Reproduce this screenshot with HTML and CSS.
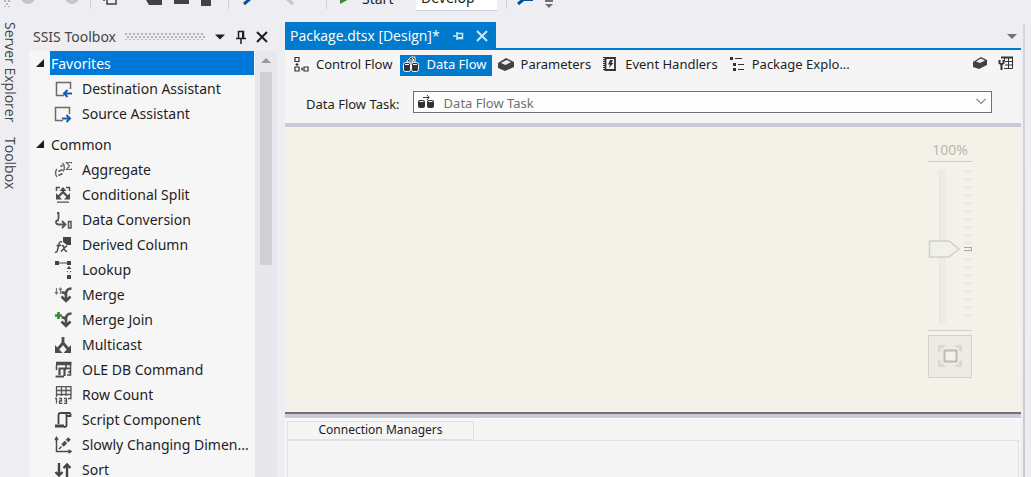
FILE: index.html
```html
<!DOCTYPE html>
<html lang="en">
<head>
<meta charset="utf-8">
<title>Package.dtsx [Design]*</title>
<link rel="stylesheet" href="styles.css">
</head>
<body>
<div class="toolbar" role="toolbar" aria-label="Standard">
  <span class="grip toolbar-grip"></span>
  <button aria-label="Back"><svg width="16" height="6"><circle cx="8" cy="-3" r="7" fill="#c6c6c9"/></svg></button>
  <button aria-label="Forward"><svg width="16" height="6"><circle cx="8" cy="-3" r="7" fill="#c6c6c9"/></svg></button>
  <span class="sep"></span>
  <button aria-label="New project"><svg width="18" height="6"><path d="M7 -4H16V4H7ZM3 -1H6M4 -2V1" fill="none" stroke="#424242" stroke-width="1.500"/></svg></button>
  <button aria-label="Open"><svg width="20" height="6"><path d="M2 0H18V5H5Z" fill="#424242"/></svg></button>
  <button aria-label="Save"><svg width="18" height="6"><path d="M2 0H17V4H2Z" fill="#424242"/></svg></button>
  <button aria-label="Save all"><svg width="16" height="6"><path d="M2 0H12V6H2Z" fill="#424242"/></svg></button>
  <span class="sep"></span>
  <button aria-label="Undo"><svg width="16" height="6"><path d="M4 4L11 -2" stroke="#00539c" stroke-width="3"/></svg></button>
  <button aria-label="Redo"><svg width="16" height="6"><path d="M2 -2L9 4" stroke="#c6c6c9" stroke-width="3"/></svg></button>
  <span class="sep"></span>
  <button aria-label="Run"><svg width="16" height="6"><path d="M2 -8L13 -2L2 4Z" fill="#388a34"/></svg></button>
  <button class="start">Start</button>
  <button class="config">Develop</button>
  <span class="sep"></span>
  <button aria-label="Find"><svg width="18" height="6"><path d="M2 4L8 -1" stroke="#00539c" stroke-width="3"/><path d="M8 0H17" stroke="#00539c" stroke-width="2"/></svg></button>
  <button aria-label="Toolbar options"><svg width="10" height="10"><path d="M1 1H9" stroke="#717171" stroke-width="2"/><path d="M1 4H9L5 8Z" fill="#717171"/></svg></button>
</div>
<div class="workspace">
  <nav class="rail">
    <button>Server Explorer</button>
    <button>Toolbox</button>
  </nav>

  <aside class="toolbox">
    <header class="toolbox-head">
      <h2>SSIS Toolbox</h2>
      <span class="grip"></span>
      <button aria-label="Window position"><svg width="12" height="14"><path d="M1 4.500H11L6 9.500Z" fill="#1e1e1e"/></svg></button>
      <button aria-label="Auto hide"><svg width="12" height="14" fill="none" stroke="#1e1e1e"><path d="M3.500 8V1.500H8.500V8M1 8.500H11M6 9V14" stroke-width="1.500"/><path d="M8 1V8" stroke-width="2"/></svg></button>
      <button aria-label="Close"><svg width="12" height="14"><path d="M1 2L11 12M11 2L1 12" stroke="#1e1e1e" stroke-width="2"/></svg></button>
    </header>
    <div class="toolbox-body">
      <div class="tree">
        <section>
          <h3 class="group selected"><svg width="22" height="24"><path d="M15 8V16H7Z" fill="#1e1e1e"/></svg><span>Favorites</span></h3>
          <ul>
            <li><svg width="18" height="18" fill="none"><path d="M10 15.500H2.500V2.500H16.500V9" stroke="#6a6a6a" stroke-width="1.500"/><path d="M18 13.500H11M13.500 10L10 13.500L13.500 17" stroke="#1460a8" stroke-width="2"/></svg>Destination Assistant</li>
            <li><svg width="18" height="18" fill="none"><path d="M9 15.500H1.500V2.500H15.500V9" stroke="#6a6a6a" stroke-width="1.500"/><path d="M8 13.500H15M12.500 10L16 13.500L12.500 17" stroke="#1460a8" stroke-width="2"/></svg>Source Assistant</li>
          </ul>
        </section>
        <section>
          <h3 class="group"><svg width="22" height="24"><path d="M15 8V16H7Z" fill="#1e1e1e"/></svg><span>Common</span></h3>
          <ul>
            <li><svg width="18" height="18" fill="none" stroke="#666"><path d="M3 8Q0 12 3 16M8.500 2Q12 6 9 10.500" stroke-width="1.400"/><path d="M4.500 10H6.500M4.500 14H6.500M7.500 4V6M7.500 8V10M7.500 12V14" stroke-width="2"/><path d="M18 3V1.500H12.500L15.500 5L12.500 8.500H18V7" stroke-width="1.200"/></svg>Aggregate</li>
            <li><svg width="18" height="18" fill="none" stroke="#4c4c4c"><path d="M2.500 5V1.500H6M12 1.500H15.500V5" stroke-width="1.500"/><path d="M9 2V6L4 11M9 6L14 11" stroke-width="2.200"/><path d="M5.500 5L9 1L12.500 5ZM2 7V13.500H8ZM16 7V13.500H10Z" fill="#4c4c4c" stroke="none"/><path d="M3 16.200H15" stroke="#777" stroke-width="1.600"/></svg>Conditional Split</li>
            <li><svg width="18" height="18" fill="none" stroke="#555"><path d="M3 2H4.500V8M5 9Q2 9 2 11Q2 13.500 5 13.500H11M8 10L11.500 13.500L8 17" stroke-width="1.800"/><path d="M14.500 10.500H17V17H14.500Z" stroke-width="1.500"/></svg>Data Conversion</li>
            <li><svg width="18" height="18" fill="none" stroke="#4c4c4c"><path d="M9 1H17V9H13L9 6Z" fill="#444" stroke="none"/><path d="M8 6Q5.500 5 5 8L3.500 14Q3 17 1 16M2.500 9.500H7" stroke-width="1.500"/><path d="M7.500 9.500Q9.500 9 10 12T13 15.500M13 9.500L7 15.500" stroke-width="1.500"/></svg>Derived Column</li>
            <li><svg width="18" height="18" fill="#444"><path d="M1 0H5V4H1ZM13 0H17V4H13ZM13 14H17V18H13ZM5 1.500H13V2.500H5ZM14 5.500H16V8H14ZM14 10H16V12H14ZM12.500 8L15 5.500L17.500 8ZM12.500 10L15 12.500L17.500 10Z"/></svg>Lookup</li>
            <li><svg width="18" height="18" fill="none" stroke="#4c4c4c"><path d="M2.500 2V8M1 6L2.500 8L4 6M6.500 8V2M5 4L6.500 2L8 4" stroke="#777" stroke-width="1.200"/><path d="M17.500 2.500Q12 2.500 12 8V15M7.500 6.500Q12 6 12 10M7.500 10.500L12 15L16.500 10.500" stroke-width="2.600"/></svg>Merge</li>
            <li><svg width="18" height="18" fill="none" stroke="#4c4c4c"><path d="M4.500 1V8M1 4.500H8" stroke="#388a34" stroke-width="2.600"/><path d="M17.500 2.500Q12 2.500 12 8V15M7.500 6.500Q12 6 12 10M7.500 10.500L12 15L16.500 10.500" stroke-width="2.600"/></svg>Merge Join</li>
            <li><svg width="18" height="18" fill="none" stroke="#4c4c4c"><path d="M9 1V7L3 14M9 7L15 14" stroke-width="2.800"/><path d="M1 9V17H8.500ZM17 9V17H9.500Z" fill="#4c4c4c" stroke="none"/></svg>Multicast</li>
            <li><svg width="18" height="18" fill="none" stroke="#4c4c4c"><path d="M2 2.500H17.500" stroke-width="3.500"/><path d="M2.500 4V9M16.500 4V14H13M12 4V7M13 7.500H17M14 11H17" stroke-width="1.500"/><path d="M4.500 7.500H12L10.500 9V15M5.500 8V14M1.500 15.500H10" stroke-width="2.200"/></svg>OLE DB Command</li>
            <li><svg width="18" height="18" fill="none" stroke="#555"><path d="M2.500 .500H17V12.500H14M2.500 0V11M7.500 0V10M12 0V10M2 4.500H17M2 8.500H17" stroke-width="1.300"/><path d="M1 12.500H2.500V17.500M5 12.500H7.500V15H5.500V17.500H8.500M10 12.500H12.500V17.500H10M10.500 15H12" stroke-width="1.300"/></svg>Row Count</li>
            <li><svg width="18" height="18" fill="none" stroke="#444"><path d="M4.500 13V4Q4.500 2 6.500 2H15Q17 2 16.500 5H13M12.500 3V14Q12.500 16 10 16" stroke-width="1.800"/><path d="M1 15H10" stroke-width="3"/></svg>Script Component</li>
            <li><svg width="18" height="18" fill="none" stroke="#4c4c4c"><path d="M2.500 2V15.500H17M1 4L2.500 1.500L4 4M14.500 14L17 15.500L14.500 17" stroke-width="1.500"/><path d="M5 13L7.500 10.500" stroke-width="1.500"/><path d="M8.500 9.500L12 6M13 5L15.500 2.500" stroke-width="3.500"/></svg>Slowly Changing Dimen...</li>
            <li><svg width="18" height="18" fill="none" stroke="#444" stroke-width="2.400"><path d="M5 2V15M1.500 11L5 14.500L8.500 11M13 16V3M9.500 7L13 3.500L16.500 7"/></svg>Sort</li>
          </ul>
        </section>
      </div>
      <div class="scrollbar">
        <svg width="12" height="14"><path d="M1 12H11L6 7Z" fill="#999"/></svg>
        <span class="thumb"></span>
      </div>
    </div>
  </aside>

  <main class="editor">
    <div class="doc-tabs">
      <div class="doc-tab">
        <span>Package.dtsx [Design]*</span>
        <button aria-label="Pin tab"><svg width="12" height="12" fill="none" stroke="#d0e6f5"><path d="M1 6H5M5 2V10M5 3.500H10.500V8.500H5" stroke-width="1.500"/><path d="M5 8H11" stroke-width="2"/></svg></button>
        <button aria-label="Close tab"><svg width="12" height="12"><path d="M1 1L11 11M11 1L1 11" stroke="#d0e6f5" stroke-width="2"/></svg></button>
      </div>
      <button class="doc-menu" aria-label="Open documents"><svg width="10" height="6"><path d="M0 0H10L5 5Z" fill="#717171"/></svg></button>
    </div>
    <div class="designer">
      <div class="views">
        <button class="view"><svg width="16" height="16" fill="none" stroke="#333"><path d="M2 1.500H6V5.500H2ZM2 11H6V15H2ZM11 11H15V15H11ZM4 7V10M8 13H10" stroke-width="1.200"/><path d="M2.500 8.500H5.500M9 11.500V14.500"/></svg>Control Flow</button>
        <button class="view active"><svg width="16" height="16"><g fill="#333" stroke="#f5f5f5"><path d="M4 5L8 1H12V6H4Z"/><rect x=".5" y="6.500" width="7" height="9" rx="2"/><rect x="8.500" y="6.500" width="7" height="9" rx="2"/></g><path d="M2 8.500H6M10 8.500H14M6 4H11M9 2L11 4L9 6" stroke="#f5f5f5" fill="none"/></svg>Data Flow</button>
        <button class="view"><svg width="16" height="16"><path d="M0 7L8 2L16 6V11L7 15L0 12Z" fill="#424242"/><path d="M3 7L8.500 4L13 6L7.500 9Z" fill="#eee"/></svg>Parameters</button>
        <button class="view"><svg width="16" height="16"><path d="M3.500 2H13V14H3.500Z" fill="#f5f5f5" stroke="#333" stroke-width="1.800"/><path d="M2 1V15" stroke="#333" stroke-width="2" stroke-dasharray="1 1"/><path d="M8 4H11L9.500 7H11.500L7 12L8 8.500H6Z" fill="#333"/></svg>Event Handlers</button>
        <button class="view"><svg width="16" height="16" fill="#333"><path d="M1 1H4V4H1ZM4 7H7V10H4ZM4 12H7V15H4ZM6 2H13V3H6ZM9 8H15V9H9ZM9 13H15V14H9Z"/></svg>Package Explo...</button>
        <span class="view-tools">
          <button aria-label="Parameters"><svg width="16" height="16"><path d="M1 7L9 2L15 5V10L7 14L1 12Z" fill="#424242"/><path d="M4 6.500L9 3.500L13 5.500L8 8Z" fill="#eee"/></svg></button>
          <button aria-label="Variables"><svg width="16" height="16" fill="none" stroke="#333"><path d="M3 2.500H14.500M7 6.500H14.500M7 10H14.500M6 13.500H14.500V2M6.500 2V6M10.500 2V14"/><path d="M3 2.500H15" stroke-width="2"/><path d="M1.500 5V8L3.500 9.500V15M5.500 5V8L3.500 9.500" stroke-width="2"/></svg></button>
        </span>
      </div>
      <div class="task">
        <span id="task-label">Data Flow Task:</span>
        <button class="combo" aria-labelledby="task-label task-value">
          <svg width="16" height="16" fill="#333"><rect x="0" y="6" width="7" height="8" rx="2"/><rect x="9" y="6" width="7" height="8" rx="2"/><path d="M1.500 7.500H5.500M10.500 7.500H14.500" stroke="#fff"/><path d="M5 3.500H11M9 1L11 3.500L9 6" stroke="#333" fill="none"/></svg>
          <span id="task-value">Data Flow Task</span>
          <svg width="12" height="8" fill="none" stroke="#333"><path d="M1.500 1L6 5.500L10.500 1"/></svg>
        </button>
      </div>
      <div class="canvas">
        <div class="zoom">
          <label for="zoom">100%</label>
          <div class="zoom-track">
            <input id="zoom" type="range" min="0" max="100" value="52">
            <span class="ticks"></span>
          </div>
          <button class="fit" aria-label="Fit to window"><svg width="26" height="26" fill="none"><path d="M1 1H9L6 4H4V6L1 9ZM25 1H17L20 4H22V6L25 9ZM1 23H9L6 20H4V18L1 15ZM25 23H17L20 20H22V18L25 15Z" fill="#dad8d2"/><path d="M7.500 6.500H19.500V17.500H7.500Z" fill="#f5f1e9" stroke="#bdbcb8" stroke-width="2"/></svg></button>
        </div>
      </div>
      <div class="managers">
        <div class="managers-tab">Connection Managers</div>
        <div class="managers-body"></div>
      </div>
    </div>
  </main>
  <div class="edge"></div>
</div>
</body>
</html>
```
FILE: styles.css
```css
* { box-sizing: border-box; }

body {
  margin: 0;
  height: 100vh;
  display: flex;
  flex-direction: column;
  overflow: hidden;
  background: #eeeef2;
  color: #1e1e1e;
  font: 14px/20px "Noto Sans", "Open Sans", sans-serif;
}

button {
  margin: 0;
  padding: 0;
  border: 0;
  background: none;
  color: inherit;
  font: inherit;
  text-align: left;
}

svg { display: block; flex: none; }
h2, h3, ul { margin: 0; padding: 0; font: inherit; list-style: none; }

.grip {
  height: 7px;
  background:
    radial-gradient(circle at 1px 1px, #b4b4ba 1px, transparent 1px) 0 0 / 4px 6px,
    radial-gradient(circle at 1px 1px, #b4b4ba 1px, transparent 1px) 2px 3px / 4px 6px;
}

/* Toolbar */
.toolbar {
  flex: none;
  height: 22px;
  padding-left: 4px;
  display: grid;
  grid-template-columns: 16px 44px 24px 12px 44px 28px 27px 27px 14px 44px 40px 14px 24px 54px 88px 12px 28px 12px;
  align-items: start;
  overflow: hidden;
}
.toolbar-grip { width: 6px; }
.sep { width: 1px; height: 9px; margin-left: 2px; background: #ccceda; }
.toolbar .start, .toolbar .config { height: 11px; display: flex; align-items: flex-end; line-height: 24px; }
.toolbar .config { width: 81px; padding-left: 5px; background: #fff; border-bottom: 1px solid #ccceda; }

.workspace { flex: 1; min-height: 0; display: flex; }

/* Side rail */
.rail { flex: none; width: 29px; display: flex; flex-direction: column; align-items: flex-start; gap: 15px; color: #444; font-family: "Open Sans", sans-serif; }
.rail button { writing-mode: vertical-rl; line-height: 20px; }

/* Toolbox */
.toolbox { flex: none; width: 248px; margin-right: 8px; display: flex; flex-direction: column; }
.toolbox-head { flex: none; height: 29px; padding: 0 9px 0 4px; display: flex; align-items: center; gap: 9px; color: #444; }
.toolbox-head .grip { flex: 1; }
.toolbox-body { flex: 1; min-height: 0; display: flex; }
.tree { flex: 1; overflow: hidden; background: #f6f6f6; white-space: nowrap; }
.tree section { margin-bottom: 6px; }
.group { height: 25px; padding-right: 1px; display: flex; }
.group span { flex: 1; height: 24px; padding-left: 1px; line-height: 25px; }
.group svg { width: 21px; }
.selected span { background: #0078d7; color: #fff; }
.tree li { height: 25px; padding-left: 25px; display: flex; align-items: center; gap: 10px; }
.scrollbar { width: 22px; padding: 0 5px; background: #e8e8ec; }
.thumb { display: block; margin-top: 7px; height: 193px; background: #d0d1d7; }

/* Document */
.editor { flex: 1; min-width: 0; display: flex; flex-direction: column; }
.doc-tabs { flex: none; height: 28px; display: flex; justify-content: space-between; border-bottom: 2px solid #007acc; font-family: "Open Sans", sans-serif; }
.doc-tab { height: 28px; padding: 0 8px 0 5px; display: flex; align-items: center; gap: 12px; background: #007acc; color: #fff; white-space: nowrap; }
.doc-menu { padding: 4px 4px 0 0; }
.designer { flex: 1; min-height: 0; display: flex; flex-direction: column; background: #f5f5f5; }
.views { flex: none; height: 28px; padding: 5px 7px 2px 5px; display: flex; white-space: nowrap; font-size: 13px; }
.view { padding: 0 5px 3px 3px; margin-right: 3px; display: flex; align-items: center; gap: 7px; line-height: 18px; }
.view.active { background: #007acc; color: #fff; }
.view-tools { margin-left: auto; padding-bottom: 5px; display: flex; align-items: center; gap: 10px; }
.task { flex: none; height: 45px; padding: 13px 29px 10px 21px; display: flex; align-items: center; gap: 13px; font-size: 13px; }
.task > span { padding-top: 3px; }
.combo { flex: 1; height: 22px; padding: 0 4px; display: flex; align-items: center; gap: 10px; background: #fdfdfd; border: 1px solid #717171; color: #717171; line-height: 20px; }
.combo span { flex: 1; padding-top: 1px; }
.canvas {
  flex: 1;
  min-height: 0;
  padding: 13px 49px 0 0;
  display: flex;
  justify-content: flex-end;
  background: #f4f1e8;
  border-top: 4px solid #c8cad8;
  border-bottom: 2px solid #717171;
}
.zoom { width: 44px; color: #bbb8b2; font-size: 14px; }
.zoom label { display: block; height: 22px; border-bottom: 1px solid #cfcdc8; line-height: 20px; text-align: center; }
.zoom-track { height: 169px; padding-top: 8px; display: flex; gap: 4px; border-bottom: 1px solid #cfcdc8; }
.zoom input { width: 32px; height: 153px; margin: 0; appearance: none; writing-mode: vertical-lr; direction: ltr; background: linear-gradient(#e1e4df, #e1e4df) 11px 0 / 1px 100% no-repeat, linear-gradient(#ebece7, #ebece7) 12px 0 / 6px 100% no-repeat; }
.zoom input::-webkit-slider-thumb {
  appearance: none;
  width: 32px;
  height: 18px;
  background: url("data:image/svg+xml,%3Csvg xmlns='http://www.w3.org/2000/svg' width='32' height='18'%3E%3Cpath d='M1.500 1H21L31 9L21 17H1.500Z' fill='%23f1f0eb' stroke='%23cfcfcb' stroke-width='1.500'/%3E%3C/svg%3E");
}
.ticks {
  width: 8px;
  height: 153px;
  background:
    linear-gradient(#aaa, #aaa) 0 77px / 8px 1px no-repeat,
    linear-gradient(#aaa, #aaa) 0 80px / 8px 1px no-repeat,
    linear-gradient(#aaa, #aaa) 7px 77px / 1px 4px no-repeat,
    repeating-linear-gradient(#eae9e4 0 2px, transparent 2px 8px);
}
.fit { width: 44px; height: 43px; margin-top: 4px; display: grid; place-items: center; background: #efebe4; border: 1px solid #d5d2cc; }

/* Connection managers */
.managers { flex: none; height: 63px; padding: 0 2px; display: flex; flex-direction: column; border-top: 4px solid #c8cad8; box-shadow: inset 0 1px #fff; font-size: 12px; }
.managers-tab { width: 187px; height: 19px; margin-top: 3px; background: #f5f5f5; border: 1px solid #e0e1e2; line-height: 16px; text-align: center; }
.managers-body { flex: 1; border: 1px solid #e0e1e2; border-width: 1px 1px 0; }

.edge { flex: none; width: 10px; margin-top: 2px; border-right: 6px solid #eeeef2; background: linear-gradient(#d4d5e2, #c8cad8) right / 2px 100% no-repeat; }
```
